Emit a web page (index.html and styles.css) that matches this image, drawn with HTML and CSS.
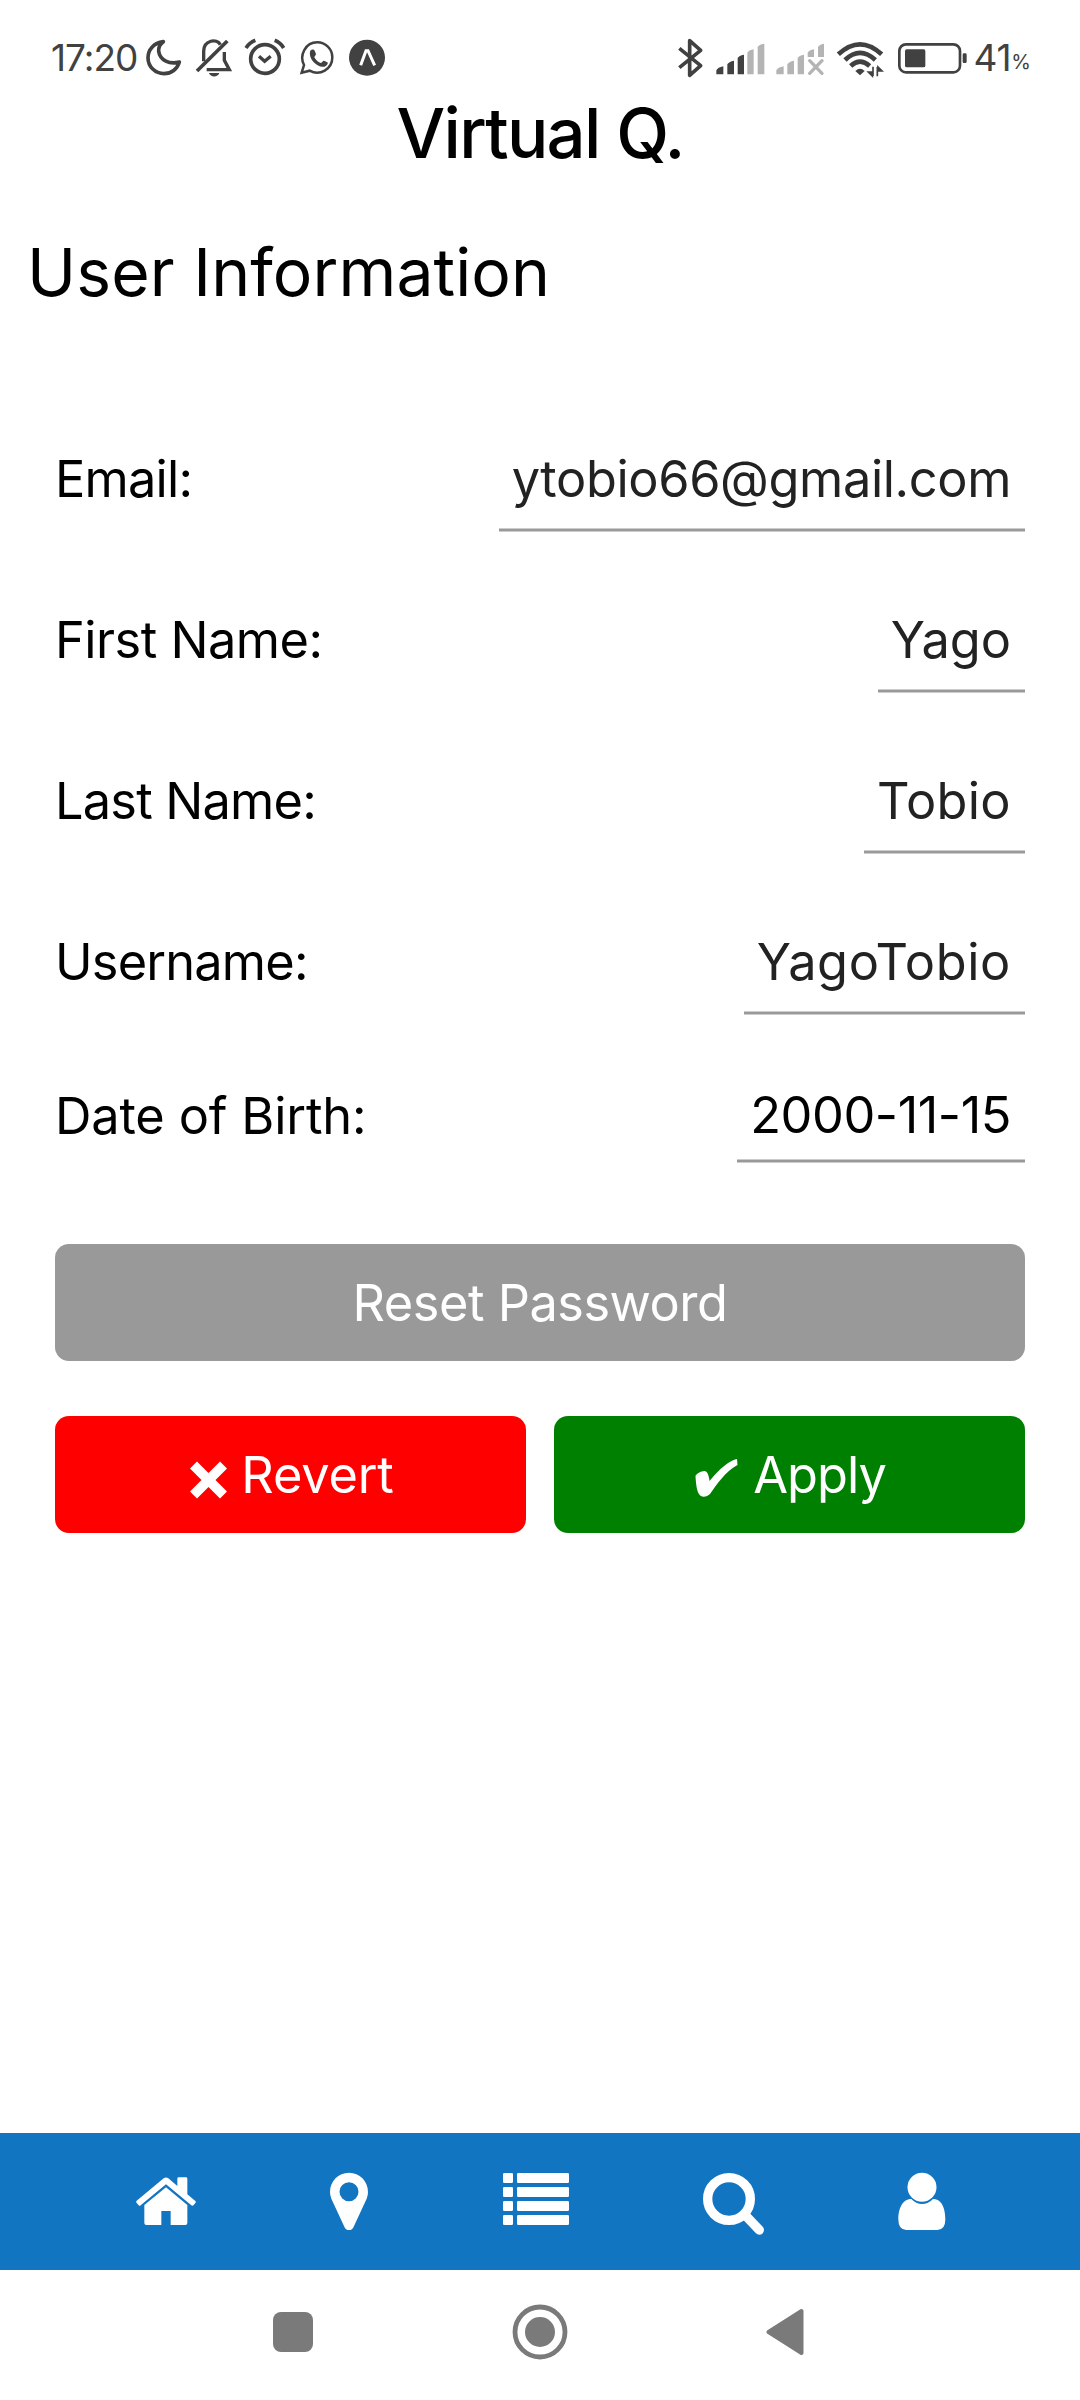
FILE: index.html
```html
<!DOCTYPE html>
<html lang="en">
<head>
<meta charset="utf-8">
<title>Virtual Q.</title>
<link rel="stylesheet" href="styles.css">
</head>
<body>
<div class="screen">
  <header class="status">
    <div class="status-left">
      <span class="clock">17:20</span>
      <svg class="moon" width="38" height="40" viewBox="346 52 114 120" fill="none" stroke="#414141" stroke-width="11" stroke-linejoin="round"><path d="M401 63C372 67 355 87 355 111C355 138 377 159 403 159C425 159 443 145 449 124C420 132 391 120 387 92C386 80 391 70 401 63Z"/></svg>
      <svg class="bell" width="38" height="40" viewBox="496 52 114 120" fill="none" stroke="#414141" stroke-width="10" stroke-linecap="butt"><path d="M502 151L593 61" stroke-width="11"/><path d="M522 122V92C522 58 562 52 572 72M584 94V119L599 147H531"/><path d="M538 157H569C565 171 542 171 538 157Z" fill="#414141" stroke="none"/></svg>
      <svg class="alarm" width="42" height="40" viewBox="644 52 126 120" fill="none" stroke="#414141" stroke-width="11"><circle cx="707" cy="115" r="43"/><path d="M689 107L706 122L724 107" stroke-width="10"/><path d="M650 82Q660 66 678 59M763 82Q754 66 736 59"/></svg>
      <svg class="whats" width="36" height="40" viewBox="807 52 108 120"><path d="M815 156L822 133C807 104 826 65 862 65C886 65 907 85 907 110C907 146 869 167 839 150Z" fill="none" stroke="#414141" stroke-width="7.500"/><path d="M841 90C845 85 852 85 854 90L858 100C859 103 852 108 853 110C858 119 865 125 873 127C876 126 879 119 882 120L892 125C896 128 890 136 884 138C861 142 833 112 841 90Z" fill="#414141"/></svg>
      <svg class="expo" width="36" height="40" viewBox="957 52 108 120"><circle cx="1011" cy="111" r="54" fill="#414141"/><path d="M992 134L1008 90H1014L1034 134" fill="none" stroke="#fff" stroke-width="9"/></svg>
    </div>
    <svg class="radio" width="285" height="40" viewBox="50 50 855 120" fill="none">
      <path d="M57 81L121 133L88 162V58L121 87L57 139" stroke="#414141" stroke-width="11" stroke-linejoin="round"/>
      <g fill="#414141"><path d="M168 159V147Q172 138 189 135V159ZM201 159V129Q205 121 221 118V159ZM232 159V110Q236 103 251 100V159Z"/></g>
      <g fill="#b4b4b4"><path d="M261 159V94Q265 87 280 84V159ZM292 159V77Q296 70 312 67V159Z"/><path d="M348 159V147Q352 138 370 135V159ZM381 159V129Q385 121 401 118V159ZM412 159V110Q416 103 431 100V159ZM442 107V94Q446 87 461 84V107ZM473 107V77Q477 70 491 67V107Z"/></g>
      <path d="M448 118L485 156M485 118L448 156" stroke="#b4b4b4" stroke-width="10" stroke-linecap="round"/>
      <g stroke="#414141" stroke-width="14"><path d="M534 99Q599 39 664 99M554 116Q599 73 645 116M571 134Q599 108 628 134"/></g>
      <path d="M585 149Q599 135 613 149L599 162Z" fill="#414141"/>
      <path d="M638 136V164M624 152H636V164ZM651 165V137M653 149H665L653 137Z" stroke="#414141" stroke-width="5" fill="#414141"/>
      <rect x="717" y="69" width="182" height="84" rx="20" stroke="#414141" stroke-width="8"/>
      <rect x="734" y="84" width="61" height="54" rx="5" fill="#414141"/>
    </svg>
    <svg class="cap" width="6" height="40" viewBox="906 50 18 120"><rect x="908" y="96" width="12" height="29" rx="4" fill="#414141"/></svg>
    <span class="level">41</span><span class="percent">%</span>
  </header>

  <h1 class="brand">Virtual Q.</h1>
  <h2 class="title">User Information</h2>

  <main class="form">
    <div class="row"><label class="tight">Email:</label><span class="value email">ytobio66@gmail.com</span></div>
    <div class="row"><label>First Name:</label><span class="value">Yago</span></div>
    <div class="row"><label class="tight">Last Name:</label><span class="value last">Tobio</span></div>
    <div class="row"><label class="tight">Username:</label><span class="value user">YagoTobio</span></div>
    <div class="row date-row"><label class="loose">Date of Birth:</label><span class="value date">2000-11-15</span></div>
    <div class="button reset">Reset Password</div>
    <div class="actions">
      <div class="button revert"><svg class="cross" width="40" height="38" viewBox="0 0 40 38"><path d="M10 0.5L21.500 12L33 0.500L40 7.500L28.500 19L40 30.500L33 37.500L21.500 26L10 37.500L3 30.500L14.500 19L3 7.500Z" fill="#fff"/></svg>Revert</div>
      <div class="button apply"><svg class="check" width="46" height="40" viewBox="0 0 46 40"><path d="M44 1C37 2 26 11 16.500 23C16 17 14 13 11.500 13C8 13 3 16 2.500 18C3 27 4 33 6 36C8 40 14 39 17 36C24 26 32 14 44.500 7Z" fill="#fff"/></svg>Apply</div>
    </div>
  </main>

  <nav class="tabs">
    <svg width="60" height="66" viewBox="107 180 180 198" fill="#fff"><path d="M190 205Q197 200 204 205L231 228V206Q231 202 235 202H257Q261 202 261 206V253L285 273Q288 276 285 279L280 285Q277 289 273 286L197 223L121 286Q118 289 115 286L109 279Q106 275 109 272Z"/><path d="M197 232L261 285V339Q261 345 255 345H211V303H183V345H138Q132 345 132 339V285Z"/></svg>
    <svg width="38" height="66" viewBox="690 180 114 198"><path fill="#fff" fill-rule="evenodd" d="M747 188C779 188 804 213 804 246Q804 257 800 266L761 350Q757 360 747 360Q737 360 733 350L694 266Q690 257 690 246C690 213 715 188 747 188ZM747 217A28.500 28.500 0 1 0 747 274A28.500 28.500 0 1 0 747 217Z"/></svg>
    <svg width="66" height="66" viewBox="1209 180 198 198" fill="#fff"><rect x="1209" y="189" width="30" height="30" rx="4"/><rect x="1209" y="231" width="30" height="30" rx="4"/><rect x="1209" y="273" width="30" height="30" rx="4"/><rect x="1209" y="315" width="30" height="30" rx="4"/><rect x="1251" y="189" width="156" height="30" rx="4"/><rect x="1251" y="231" width="156" height="30" rx="4"/><rect x="1251" y="273" width="156" height="30" rx="4"/><rect x="1251" y="315" width="156" height="30" rx="4"/></svg>
    <svg width="61" height="66" viewBox="309 180 183 198" fill="none" stroke="#fff" stroke-width="28"><circle cx="387" cy="267" r="64"/><path d="M438 318L478 360" stroke-linecap="round"/></svg>
    <svg width="48" height="66" viewBox="896 180 144 198" fill="#fff"><circle cx="968" cy="232" r="43.500"/><path d="M936 267Q950 282 968 282Q987 282 1001 267C1029 267 1038 298 1038 328Q1038 360 1014 360H921Q897 360 897 328C897 298 908 267 936 267Z"/></svg>
  </nav>

  <footer class="system">
    <svg width="40" height="56" viewBox="0 0 40 56"><rect y="8" width="40" height="40" rx="8" fill="#7a7a7a"/></svg>
    <svg width="56" height="56" viewBox="0 0 56 56"><circle cx="28" cy="28" r="25" fill="none" stroke="#7a7a7a" stroke-width="4.800"/><circle cx="28" cy="28" r="15" fill="#7a7a7a"/></svg>
    <svg width="38" height="56" viewBox="0 0 38 56"><path d="M2.500 28L35.500 7V49Z" fill="#7a7a7a" stroke="#7a7a7a" stroke-width="4" stroke-linejoin="round"/></svg>
  </footer>
</div>
</body>
</html>
```
FILE: styles.css
```css
* { box-sizing: border-box; }

body {
  margin: 0;
  background: #fff;
  color: #000;
  font-family: Inter, "Open Sans", sans-serif;
}

svg { display: block; flex: none; }

.screen {
  display: flex;
  flex-direction: column;
  width: 1080px;
  height: 2400px;
  background: #fff;
}

.status {
  display: flex;
  align-items: center;
  height: 98px;
  padding: 17px 49px 0 51px;
  color: #414141;
}

.status-left { display: flex; align-items: center; margin-right: auto; }
.clock { width: 94px; font-size: 37px; letter-spacing: -1px; }
.bell { margin-left: 12px; }
.alarm { margin-left: 11px; }
.whats { margin-left: 13px; }
.expo { margin-left: 14px; }
.level { margin-left: 6px; font-size: 37px; letter-spacing: -0.2px; }
.percent { margin-top: 9px; font-size: 20px; }

.brand {
  margin: 0;
  height: 70px;
  line-height: 70px;
  font-size: 68.8px;
  font-weight: 500;
  letter-spacing: -1.7px;
  text-align: center;
}

.title {
  margin: 64px 0 0;
  padding-left: 27px;
  line-height: 80px;
  font-size: 66px;
  font-weight: 400;
  letter-spacing: 0.1px;
}

.form {
  flex: 1;
  padding: 112px 55px 0;
  font-size: 50.5px;
}

.row {
  display: flex;
  justify-content: space-between;
  align-items: center;
  height: 108px;
  margin-bottom: 53px;
  letter-spacing: -0.5px;
}

.tight { letter-spacing: -0.8px; }
.loose { letter-spacing: -0.16px; }

.value {
  display: flex;
  align-items: center;
  height: 107px;
  margin-bottom: 1px;
  padding: 3px 14px 0 13px;
  color: #222;
  letter-spacing: 0;
  border-bottom: 2px solid #999;
  box-shadow: inset 0 -1px 0 #ccc, 0 1px 0 #ccc;
}

.email { letter-spacing: -0.38px; }
.last { letter-spacing: 0.35px; }
.user { letter-spacing: 0.6px; }

.date-row { height: 95px; margin-bottom: 81px; }
.date { height: 94px; padding-top: 0; color: #000; letter-spacing: -0.44px; }

.button {
  display: flex;
  flex: 1;
  align-items: center;
  justify-content: center;
  height: 117px;
  border-radius: 14px;
  color: #fff;
}

.reset { background: #999; letter-spacing: -0.49px; }
.actions { display: flex; gap: 28px; margin-top: 55px; }
.revert { background: #f00; letter-spacing: -0.17px; }
.apply { background: #008000; letter-spacing: -0.99px; }
.cross { margin: 10px 14px 0 0; }
.check { margin: 7px 14px 0 0; }

.tabs {
  display: flex;
  align-items: center;
  justify-content: space-between;
  height: 137px;
  padding: 3px 134px 0 136px;
  background: #1175c1;
}

.system {
  display: flex;
  align-items: center;
  justify-content: space-between;
  height: 130px;
  padding: 0 276px 6px 273px;
}
```
